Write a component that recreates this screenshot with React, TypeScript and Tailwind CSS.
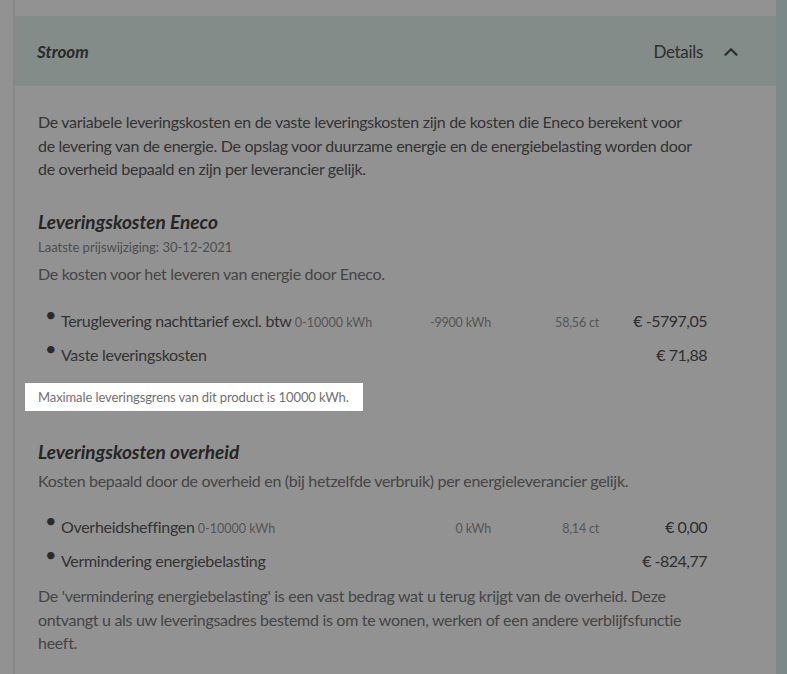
import { ChevronUp } from "lucide-react";

type Row = {
  label: string;
  range?: string;
  usage?: string;
  price?: string;
  amount: string;
};

const eneco: Row[] = [
  {
    label: "Teruglevering nachttarief excl. btw",
    range: "0-10000 kWh",
    usage: "-9900 kWh",
    price: "58,56 ct",
    amount: "€ -5797,05",
  },
  { label: "Vaste leveringskosten", amount: "€ 71,88" },
];

const overheid: Row[] = [
  {
    label: "Overheidsheffingen",
    range: "0-10000 kWh",
    usage: "0 kWh",
    price: "8,14 ct",
    amount: "€ 0,00",
  },
  { label: "Vermindering energiebelasting", amount: "€ -824,77" },
];

function CostRow({ row }: { row: Row }) {
  return (
    <li className="flex items-baseline h-[34px]">
      <span className="w-[23px] pl-[7px] text-[#2b2b2b] text-[20px] leading-none relative -top-[5px]">•</span>
      <span className="flex-1 text-[16px] text-[#333333] tracking-[-0.3px]">
        {row.label}
        {row.range && (
          <span className="text-[12.5px] text-[#555555] tracking-normal"> {row.range}</span>
        )}
      </span>
      <span className="w-[90px] text-right text-[12.5px] text-[#555555] tracking-[-0.2px]">{row.usage}</span>
      <span className="w-[108px] text-right text-[12.5px] text-[#555555] tracking-[-0.2px]">{row.price}</span>
      <span className="w-[108px] text-right text-[16px] text-[#2e2e2e] tracking-[-0.5px]">{row.amount}</span>
    </li>
  );
}

export default function App() {
  return (
    <div className="w-[787px] h-[674px] overflow-hidden bg-[#7b8a88] font-['Lato',sans-serif]">
      <div className="w-[776px] h-full bg-[#929292] pl-[13px]">
        <div className="h-full border-l-2 border-[#878787]">
          <div className="h-[16px]" />
          <header className="h-[70px] bg-[#838c89] flex items-center justify-between pl-[22px] pr-[34px]">
            <h2 className="italic font-bold text-[17px] text-[#2a2a2a] relative top-[1px]">Stroom</h2>
            <div className="flex items-center gap-[17px] text-[#2e2e2e] relative top-[1px]">
              <span className="text-[17px] tracking-[-0.3px]">Details</span>
              <ChevronUp size={22} strokeWidth={2.5} />
            </div>
          </header>
          <div className="w-[692px] pl-[23px] pt-[24px] text-[#333333]">
            <p className="w-[655px] text-[16px] leading-[23.5px] tracking-[-0.3px]">
              De variabele leveringskosten en de vaste leveringskosten zijn de kosten die Eneco berekent voor
              de levering van de energie. De opslag voor duurzame energie en de energiebelasting worden door
              de overheid bepaald en zijn per leverancier gelijk.
            </p>

            <h3 className="mt-[27px] italic font-bold text-[19px] text-[#252525]">Leveringskosten Eneco</h3>
            <p className="mt-[2px] text-[13px] text-[#4d4d4d]">Laatste prijswijziging: 30-12-2021</p>
            <p className="mt-[4px] text-[16px] text-[#454545] tracking-[-0.3px]">
              De kosten voor het leveren van energie door Eneco.
            </p>

            <ul className="mt-[23px]">
              {eneco.map((r) => (
                <CostRow key={r.label} row={r} />
              ))}
            </ul>

            <div className="-ml-[13px] mt-[6px] w-[338px] bg-white pl-[13px] py-[5px] text-[13px] leading-[18px] text-[#6f6f6f] tracking-[-0.1px]">
              Maximale leveringsgrens van dit product is 10000 kWh.
            </div>

            <h3 className="mt-[27px] italic font-bold text-[19px] text-[#252525]">Leveringskosten overheid</h3>
            <p className="mt-[3px] text-[16px] text-[#454545] tracking-[-0.3px]">
              Kosten bepaald door de overheid en (bij hetzelfde verbruik) per energieleverancier gelijk.
            </p>

            <ul className="mt-[22px]">
              {overheid.map((r) => (
                <CostRow key={r.label} row={r} />
              ))}
            </ul>

            <p className="w-[655px] mt-[1px] text-[16px] leading-[23.5px] text-[#454545] tracking-[-0.3px]">
              De 'vermindering energiebelasting' is een vast bedrag wat u terug krijgt van de overheid. Deze
              ontvangt u als uw leveringsadres bestemd is om te wonen, werken of een andere verblijfsfunctie
              heeft.
            </p>
          </div>
        </div>
      </div>
    </div>
  );
}
